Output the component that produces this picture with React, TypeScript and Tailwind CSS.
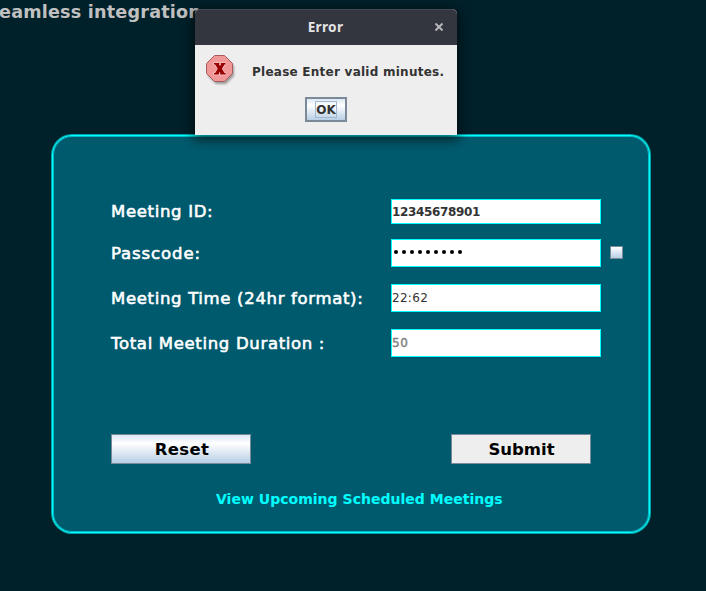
import React from "react";

type RowProps = { label: string; className: string; labelClassName?: string; children: React.ReactNode };

function Row({ label, className, labelClassName = "pt-[2px] tracking-[0.67px]", children }: RowProps) {
  return (
    <div className={`flex items-center ${className}`}>
      <label
        className={`w-[280px] shrink-0 whitespace-pre text-[16.5px] leading-5 text-white [-webkit-text-stroke:0.6px_white] ${labelClassName}`}
      >
        {label}
      </label>
      {children}
    </div>
  );
}

const field = "flex w-[210px] shrink-0 items-center border border-[#00ffff] bg-white whitespace-pre";

function ErrorIcon() {
  return (
    <svg width="32" height="32" viewBox="0 0 32 32" className="shrink-0 overflow-visible">
      <defs>
        <filter id="iconShadow" x="-20%" y="-20%" width="150%" height="150%">
          <feGaussianBlur stdDeviation="1.3" />
        </filter>
      </defs>
      <path d="M10 3h10l8 8v10l-8 8H10l-8-8V11z" fill="#000" opacity="0.35" filter="url(#iconShadow)" />
      <path d="M8.500 .5h10l8 8v10l-8 8h-10l-8-8v-10z" fill="#f09898" stroke="#a85b5b" />
      <path
        d="M8 8h5.400v1.600h-.5l1.300 2.200 1.300-2.200H15V8h4.500v1.600h-1.100l-2.500 4.200 2.600 4.200h1.200v1.500H14.200V18h.6l-1.300-2.300L12.100 18h.7v1.500H8V18h1.200l2.500-4.200L9.200 9.600H8z"
        fill="#990000"
        stroke="#fac4c4"
        strokeWidth="1.4"
        paintOrder="stroke"
      />
      <path d="M11 9l5.500 9.500M16.800 9l-5.500 9.500" stroke="#990000" strokeWidth="2.6" />
    </svg>
  );
}

function ErrorDialog() {
  return (
    <div className="absolute left-[195px] top-[9px] h-[126px] w-[262px] rounded-t-[5px] bg-[#eeeeee] shadow-[0_3px_12px_2px_rgba(0,0,0,0.6)]">
      <div className="relative flex h-9 items-center justify-center rounded-t-[5px] border-t border-[#454852] bg-[#33363f] pr-px font-['Noto_Sans',sans-serif] text-[13.600px] font-bold tracking-[0.3px] text-[#e4e4e4]">
        Error
        <svg width="8" height="8" viewBox="0 0 8 8" className="absolute right-[14px] top-[13px]">
          <path d="M.5 .5l7 7M7.500 .5l-7 7" stroke="#b5b6ba" strokeWidth="2" />
        </svg>
      </div>
      <div className="flex pl-[11px] pt-[10px]">
        <ErrorIcon />
        <span className="ml-[14px] mt-[9px] whitespace-nowrap text-[12px] font-bold leading-4 tracking-[0.25px] text-[#333333]">
          Please Enter valid minutes.
        </span>
      </div>
      <button className="ml-[110px] mt-[10px] flex h-[25px] w-[42px] items-center justify-center border-2 border-[#7a8a99] bg-linear-to-b from-[#dde8f3] via-white via-30% to-[#b8cfe5]">
        <span className="flex h-[17px] w-[22px] items-center justify-center border border-[#a3b8cc] text-[12px] font-bold leading-none text-[#333333]">
          OK
        </span>
      </button>
    </div>
  );
}

export default function App() {
  return (
    <main className="relative h-[591px] w-[706px] overflow-hidden bg-[#00202a] font-['DejaVu_Sans',sans-serif]">
      <div className="-ml-px h-[135px] whitespace-nowrap pt-px text-[17.600px] font-bold leading-[22px] tracking-[0.2px] text-[#c0c0c0]">
        eamless integration
      </div>
      <section className="ml-[52px] h-[398px] w-[598px] rounded-[20px] border border-[#00ffff] bg-[#005a6e] pl-[58px] pt-[63px] shadow-[0_0_0_1px_rgba(0,255,255,0.6),inset_0_0_0_1px_rgba(0,255,255,0.6)]">
        <Row label="Meeting ID:" className="h-[25px]" labelClassName="tracking-[0.67px]">
          <div className={`${field} h-[25px] text-[12px] font-bold tracking-[-0.35px] text-[#333333]`}>12345678901</div>
        </Row>
        <Row label="Passcode:" className="mt-[15px] h-[28px]" labelClassName="pt-[2px] tracking-[0.9px]">
          <div className={`${field} h-[28px] gap-1 pl-[2px]`}>
            {Array.from({ length: 9 }, (_, i) => (
              <span key={i} className="mb-[2px] size-1 rounded-full bg-black" />
            ))}
          </div>
          <span className="mb-px ml-[9px] size-[13px] border border-[#7a8a99] bg-linear-to-b from-white to-[#b8cfe5]" />
        </Row>
        <Row label="Meeting Time (24hr format):" className="mt-[17px] h-[28px]">
          <div className={`${field} h-[28px] text-[12px] tracking-[0.3px] text-[#333333]`}>22:62</div>
        </Row>
        <Row label="Total Meeting Duration :" className="mt-[17px] h-[28px]">
          <div className={`${field} h-[28px] text-[12px] tracking-[0.5px] text-[#808080] [-webkit-text-stroke:0.4px_#808080]`}>50</div>
        </Row>
        <div className="mt-[77px] flex gap-[200px] text-[16.500px] font-bold leading-5 text-black">
          <button className="h-[30px] w-[140px] border border-[#7a8a99] bg-linear-to-b from-[#dde8f3] via-white via-30% to-[#b8cfe5] pl-[2px] pt-[2px] tracking-[0.3px]">
            Reset
          </button>
          <button className="h-[30px] w-[140px] border border-[#7a8a99] bg-[#eeeeee] pl-px pt-[2px]">Submit</button>
        </div>
        <a className="ml-[105px] mt-[26px] block whitespace-nowrap text-[14px] font-bold leading-[18px] tracking-[0.02px] text-[#00ffff]">
          View Upcoming Scheduled Meetings
        </a>
      </section>
      <ErrorDialog />
    </main>
  );
}
